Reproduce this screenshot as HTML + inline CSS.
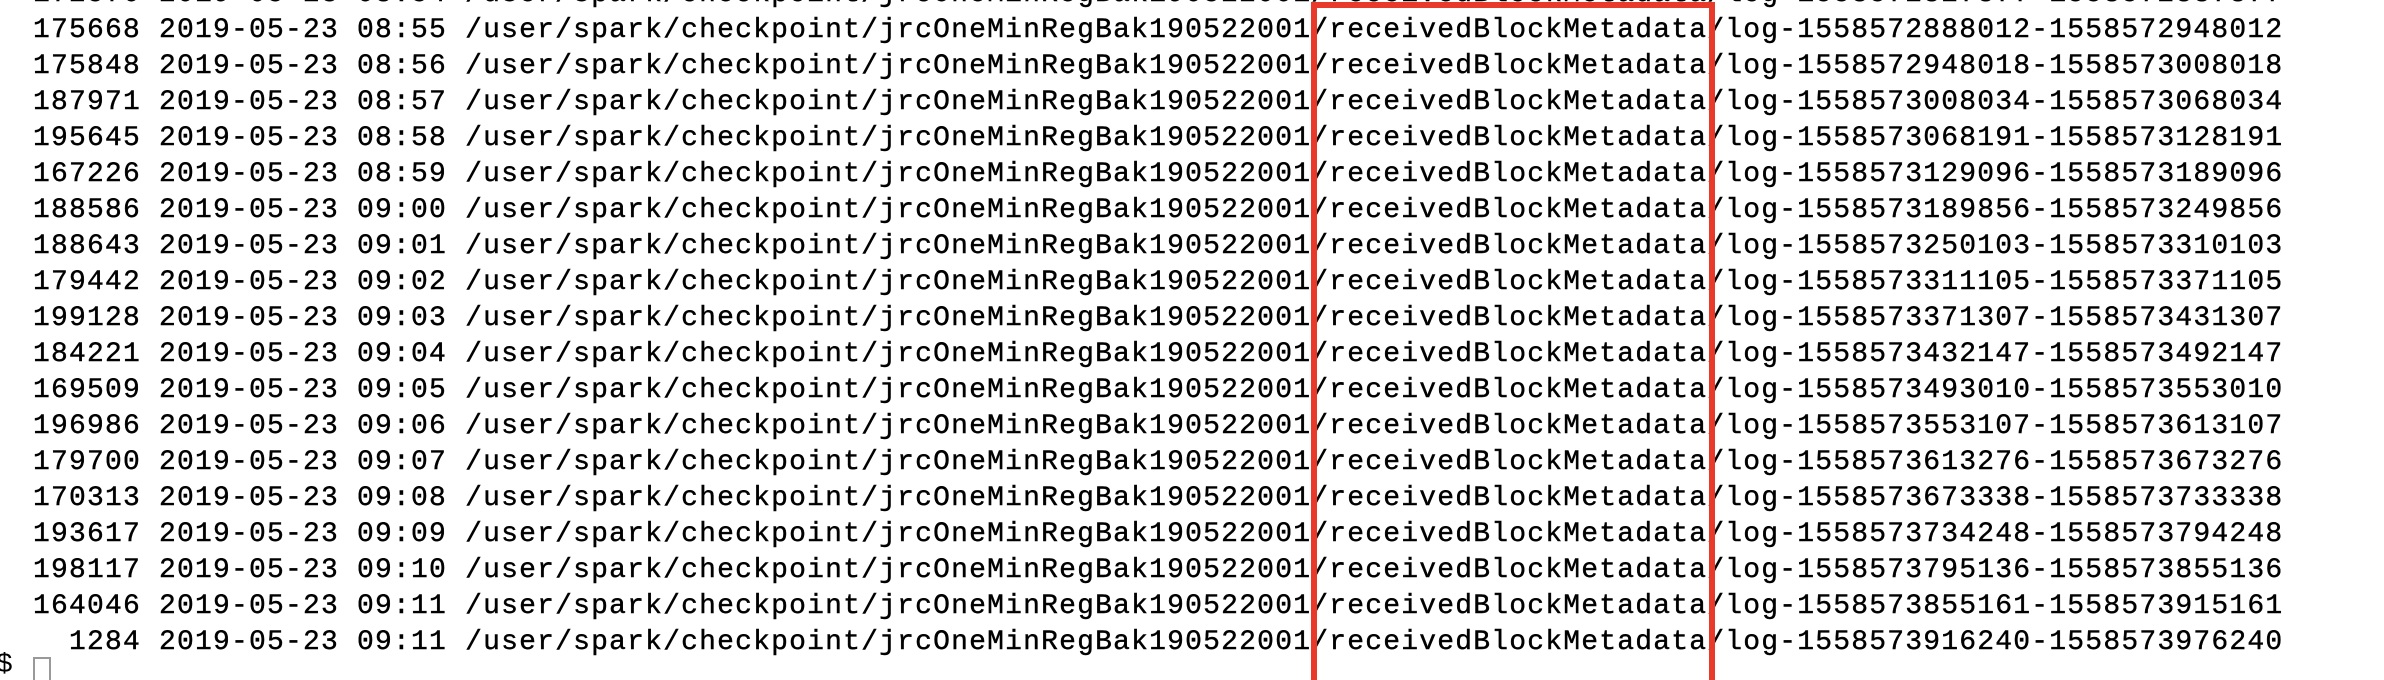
<!DOCTYPE html>
<html><head><meta charset="utf-8"><style>
html,body{margin:0;padding:0;background:#fff;width:2384px;height:680px;overflow:hidden;position:relative}
pre{position:absolute;left:33px;top:-23px;margin:0;font-family:"Liberation Mono",monospace;font-size:28px;letter-spacing:1.2px;line-height:36px;color:#000;-webkit-text-stroke:0.4px #000}
.bar{position:absolute;background:#e8392b}
.cur{position:absolute;left:33px;top:657px;width:14px;height:30px;border:2px solid #999}
.d{position:absolute;left:-4px;top:648px;font-family:"Liberation Mono",monospace;font-size:28px;line-height:36px}
</style></head><body>
<pre>172570 2019-05-23 08:54 /user/spark/checkpoint/jrcOneMinRegBak190522001/receivedBlockMetadata/log-1558572827877-1558572887877
175668 2019-05-23 08:55 /user/spark/checkpoint/jrcOneMinRegBak190522001/receivedBlockMetadata/log-1558572888012-1558572948012
175848 2019-05-23 08:56 /user/spark/checkpoint/jrcOneMinRegBak190522001/receivedBlockMetadata/log-1558572948018-1558573008018
187971 2019-05-23 08:57 /user/spark/checkpoint/jrcOneMinRegBak190522001/receivedBlockMetadata/log-1558573008034-1558573068034
195645 2019-05-23 08:58 /user/spark/checkpoint/jrcOneMinRegBak190522001/receivedBlockMetadata/log-1558573068191-1558573128191
167226 2019-05-23 08:59 /user/spark/checkpoint/jrcOneMinRegBak190522001/receivedBlockMetadata/log-1558573129096-1558573189096
188586 2019-05-23 09:00 /user/spark/checkpoint/jrcOneMinRegBak190522001/receivedBlockMetadata/log-1558573189856-1558573249856
188643 2019-05-23 09:01 /user/spark/checkpoint/jrcOneMinRegBak190522001/receivedBlockMetadata/log-1558573250103-1558573310103
179442 2019-05-23 09:02 /user/spark/checkpoint/jrcOneMinRegBak190522001/receivedBlockMetadata/log-1558573311105-1558573371105
199128 2019-05-23 09:03 /user/spark/checkpoint/jrcOneMinRegBak190522001/receivedBlockMetadata/log-1558573371307-1558573431307
184221 2019-05-23 09:04 /user/spark/checkpoint/jrcOneMinRegBak190522001/receivedBlockMetadata/log-1558573432147-1558573492147
169509 2019-05-23 09:05 /user/spark/checkpoint/jrcOneMinRegBak190522001/receivedBlockMetadata/log-1558573493010-1558573553010
196986 2019-05-23 09:06 /user/spark/checkpoint/jrcOneMinRegBak190522001/receivedBlockMetadata/log-1558573553107-1558573613107
179700 2019-05-23 09:07 /user/spark/checkpoint/jrcOneMinRegBak190522001/receivedBlockMetadata/log-1558573613276-1558573673276
170313 2019-05-23 09:08 /user/spark/checkpoint/jrcOneMinRegBak190522001/receivedBlockMetadata/log-1558573673338-1558573733338
193617 2019-05-23 09:09 /user/spark/checkpoint/jrcOneMinRegBak190522001/receivedBlockMetadata/log-1558573734248-1558573794248
198117 2019-05-23 09:10 /user/spark/checkpoint/jrcOneMinRegBak190522001/receivedBlockMetadata/log-1558573795136-1558573855136
164046 2019-05-23 09:11 /user/spark/checkpoint/jrcOneMinRegBak190522001/receivedBlockMetadata/log-1558573855161-1558573915161
  1284 2019-05-23 09:11 /user/spark/checkpoint/jrcOneMinRegBak190522001/receivedBlockMetadata/log-1558573916240-1558573976240</pre>
<div class="d">$</div>
<div class="cur"></div>
<div class="bar" style="left:1311px;top:2px;width:6px;height:678px"></div>
<div class="bar" style="left:1709px;top:2px;width:6px;height:678px"></div>
<div class="bar" style="left:1311px;top:2px;width:404px;height:6px"></div>
</body></html>
